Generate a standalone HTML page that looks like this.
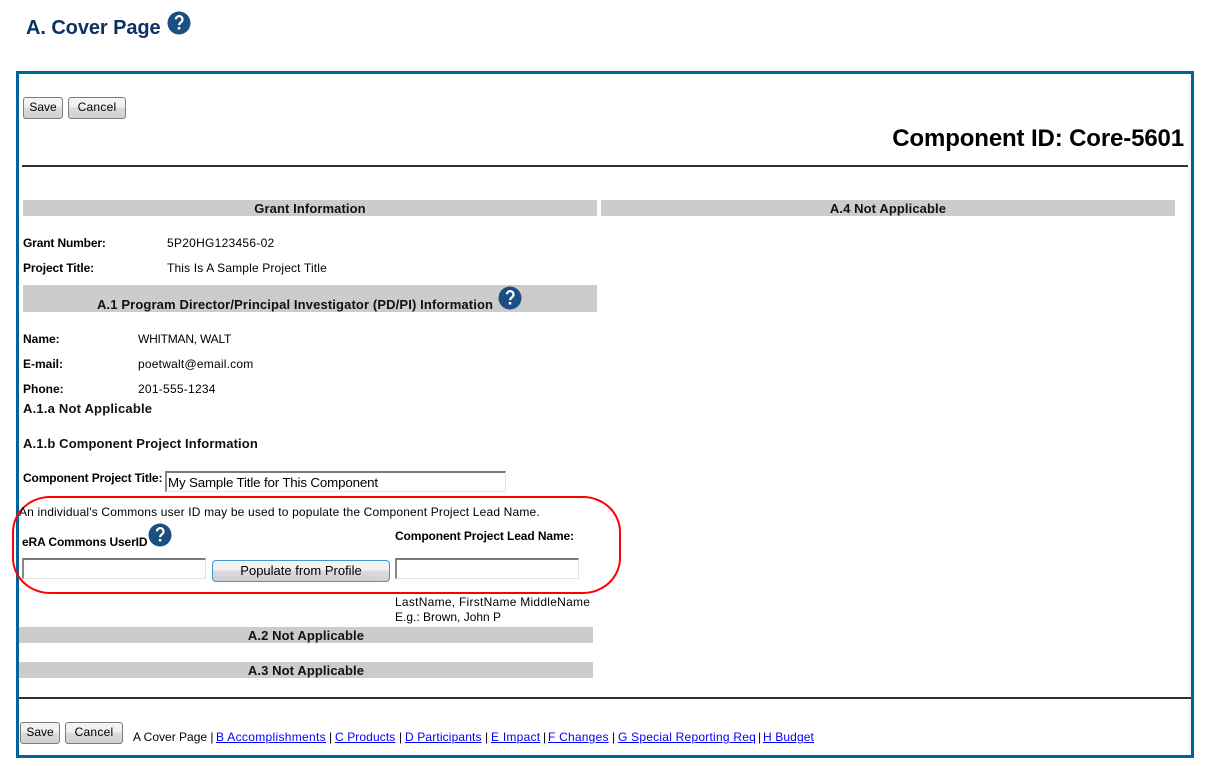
<!DOCTYPE html>
<html lang="en">
<head>
<meta charset="utf-8">
<title>A. Cover Page</title>
<style>
html,body{margin:0;padding:0;background:#fff;}
body{position:relative;width:1210px;height:766px;overflow:hidden;font-family:"Liberation Sans",Arial,sans-serif;font-size:12px;color:#000;}
.t{position:absolute;white-space:nowrap;line-height:14px;}
.b{font-weight:bold;}
.bar{position:absolute;background:#ccc;}
.c{position:absolute;text-align:center;font-weight:bold;white-space:nowrap;line-height:14px;font-size:13px;letter-spacing:.1px;color:#111;}
.hr{position:absolute;background:#333;height:2px;}
.btn{position:absolute;box-sizing:border-box;border:1px solid #7d7d7d;border-radius:3px;background:linear-gradient(#f4f4f4,#f0f0f0 45%,#dcdcdc 50%,#cfcfcf);text-align:center;font-size:12px;line-height:19px;height:22px;color:#000;}
.inp{position:absolute;box-sizing:border-box;background:#fff;border:1px solid #e3e3e3;border-top:2px solid #7a7a7a;border-left:2px solid #8a8a8a;}
.q{position:absolute;display:block;}
a{color:#00f;text-decoration:underline;}
</style>
</head>
<body>
<div class="t b" style="left:26px;top:16px;line-height:24px;font-size:20px;letter-spacing:-.08px;color:#0c3162;">A. Cover Page</div>
<svg class="q" style="left:167px;top:11px" width="24" height="24" viewBox="0 0 24 24"><circle cx="12" cy="12" r="11.5" fill="#1b4f82"/><path d="M8.9 8.3a3.3 3.3 0 1 1 5.2 2.8c-1.3.9-2 1.5-2 3" fill="none" stroke="#fff" stroke-width="2.2"/><rect x="10.8" y="16" width="2.5" height="2.5" fill="#fff"/></svg>

<div style="position:absolute;left:16px;top:71px;width:1172px;height:681px;border:3px solid #00659a;"></div>

<div class="btn" style="left:23px;top:97px;width:40px;">Save</div>
<div class="btn" style="left:68px;top:97px;width:58px;letter-spacing:.25px;">Cancel</div>
<div class="t b" style="right:26px;top:124px;line-height:30px;font-size:24px;letter-spacing:-.13px;">Component ID: Core-5601</div>
<div class="hr" style="left:22px;top:165px;width:1166px;"></div>

<div class="bar" style="left:23px;top:200px;width:574px;height:16px;"></div>
<div class="bar" style="left:601px;top:200px;width:574px;height:16px;"></div>
<div class="c" style="left:23px;top:202px;width:574px;">Grant Information</div>
<div class="c" style="left:601px;top:202px;width:574px;">A.4 Not Applicable</div>

<div class="t b" style="left:23px;top:236px;letter-spacing:-.15px;">Grant Number:</div>
<div class="t" style="left:167px;top:236px;letter-spacing:.27px;">5P20HG123456-02</div>
<div class="t b" style="left:23px;top:261px;letter-spacing:-.1px;">Project Title:</div>
<div class="t" style="left:167px;top:261px;letter-spacing:.15px;">This Is A Sample Project Title</div>

<div class="bar" style="left:23px;top:285px;width:574px;height:27px;"></div>
<div class="t b" style="left:97px;top:298px;font-size:13px;letter-spacing:.13px;color:#111;">A.1 Program Director/Principal Investigator (PD/PI) Information</div>
<svg class="q" style="left:498px;top:286px" width="24" height="24" viewBox="0 0 24 24"><circle cx="12" cy="12" r="11.5" fill="#1b4f82"/><path d="M8.9 8.3a3.3 3.3 0 1 1 5.2 2.8c-1.3.9-2 1.5-2 3" fill="none" stroke="#fff" stroke-width="2.2"/><rect x="10.8" y="16" width="2.5" height="2.5" fill="#fff"/></svg>

<div class="t b" style="left:23px;top:332px;">Name:</div>
<div class="t" style="left:138px;top:332px;letter-spacing:-.22px;">WHITMAN, WALT</div>
<div class="t b" style="left:23px;top:357px;">E-mail:</div>
<div class="t" style="left:138px;top:357px;letter-spacing:.22px;">poetwalt@email.com</div>
<div class="t b" style="left:23px;top:382px;">Phone:</div>
<div class="t" style="left:138px;top:382px;letter-spacing:.25px;">201-555-1234</div>
<div class="t b" style="left:23px;top:402px;font-size:13px;letter-spacing:.2px;color:#111;">A.1.a Not Applicable</div>
<div class="t b" style="left:23px;top:437px;font-size:13px;letter-spacing:.13px;color:#111;">A.1.b Component Project Information</div>

<div class="t b" style="left:23px;top:471px;letter-spacing:-.13px;">Component Project Title:</div>
<div class="inp" style="left:165px;top:471px;width:341px;height:21px;"></div>
<div class="t" style="left:168px;top:476px;font-size:13.33px;letter-spacing:-.16px;">My Sample Title for This Component</div>

<div style="position:absolute;left:12px;top:496px;width:605px;height:94px;border:2px solid #f00;border-radius:38px/36px;"></div>
<div class="t" style="left:19px;top:505px;letter-spacing:.17px;">An individual's Commons user ID may be used to populate the Component Project Lead Name.</div>
<div class="t b" style="left:22px;top:535px;letter-spacing:-.12px;">eRA Commons UserID</div>
<svg class="q" style="left:148px;top:523px" width="24" height="24" viewBox="0 0 24 24"><circle cx="12" cy="12" r="11.5" fill="#1b4f82"/><path d="M8.9 8.3a3.3 3.3 0 1 1 5.2 2.8c-1.3.9-2 1.5-2 3" fill="none" stroke="#fff" stroke-width="2.2"/><rect x="10.8" y="16" width="2.5" height="2.5" fill="#fff"/></svg>
<div class="t b" style="left:395px;top:529px;letter-spacing:-.11px;">Component Project Lead Name:</div>
<div class="inp" style="left:22px;top:558px;width:184px;height:21px;"></div>
<div class="btn" style="left:212px;top:560px;width:178px;border-color:#3c9bc9;border-radius:4px;font-size:13px;">Populate from Profile</div>
<div class="inp" style="left:395px;top:558px;width:184px;height:21px;"></div>
<div class="t" style="left:395px;top:595px;letter-spacing:.26px;">LastName, FirstName MiddleName</div>
<div class="t" style="left:395px;top:610px;">E.g.: Brown, John P</div>

<div class="bar" style="left:19px;top:627px;width:574px;height:16px;"></div>
<div class="c" style="left:19px;top:629px;width:574px;">A.2 Not Applicable</div>
<div class="bar" style="left:19px;top:662px;width:574px;height:16px;"></div>
<div class="c" style="left:19px;top:664px;width:574px;">A.3 Not Applicable</div>

<div class="hr" style="left:19px;top:697px;width:1172px;"></div>
<div class="btn" style="left:20px;top:722px;width:40px;">Save</div>
<div class="btn" style="left:65px;top:722px;width:58px;letter-spacing:.25px;">Cancel</div>
<div class="t" style="left:133px;top:730px;">A Cover Page |</div>
<div class="t" style="left:216px;top:730px;letter-spacing:.31px;"><a href="#">B Accomplishments</a></div>
<div class="t" style="left:329px;top:730px;">|</div>
<div class="t" style="left:335px;top:730px;letter-spacing:.1px;"><a href="#">C Products</a></div>
<div class="t" style="left:399px;top:730px;">|</div>
<div class="t" style="left:405px;top:730px;letter-spacing:.14px;"><a href="#">D Participants</a></div>
<div class="t" style="left:485px;top:730px;">|</div>
<div class="t" style="left:491px;top:730px;letter-spacing:.25px;"><a href="#">E Impact</a></div>
<div class="t" style="left:543px;top:730px;">|</div>
<div class="t" style="left:548px;top:730px;letter-spacing:.22px;"><a href="#">F Changes</a></div>
<div class="t" style="left:612px;top:730px;">|</div>
<div class="t" style="left:618px;top:730px;letter-spacing:.23px;"><a href="#">G Special Reporting Req</a></div>
<div class="t" style="left:758px;top:730px;">|</div>
<div class="t" style="left:763px;top:730px;letter-spacing:.12px;"><a href="#">H Budget</a></div>
</body>
</html>
